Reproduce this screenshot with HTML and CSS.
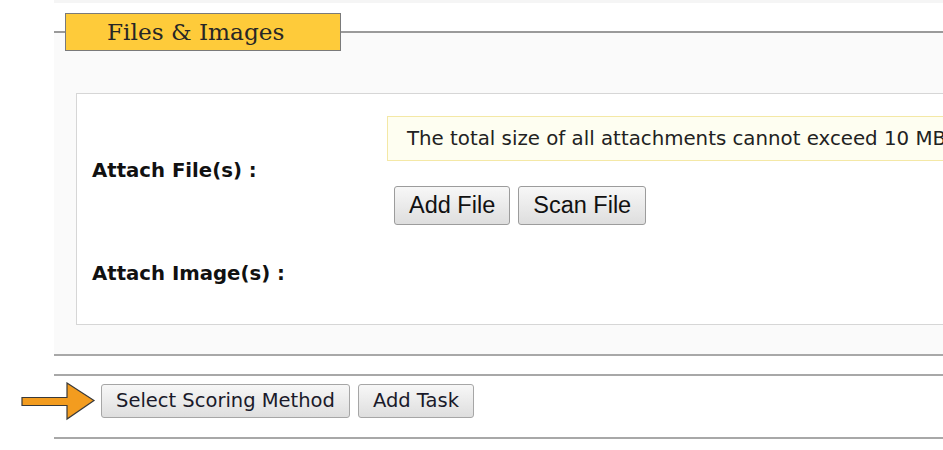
FILE: index.html
```html
<!DOCTYPE html>
<html lang="en">
<head>
    <meta charset="UTF-8">
    <meta name="viewport" content="width=device-width, initial-scale=1.0">
    <title>Files &amp; Images</title>
    <link rel="stylesheet" href="styles.css">
</head>
<body>
    <div class="page">
        <div class="top-strip"></div>

        <div class="section">
            <div class="legend">Files &amp; Images</div>

            <div class="attach-box">
                <div class="attach-row">
                    <div class="attach-label">Attach File(s) :</div>
                    <div class="attach-value">
                        <div class="notice">The total size of all attachments cannot exceed 10 MB</div>
                        <div class="btn-group">
                            <button class="btn">Add File</button>
                            <button class="btn">Scan File</button>
                        </div>
                    </div>
                </div>
                <div class="attach-row attach-row-images">
                    <div class="attach-label">Attach Image(s) :</div>
                    <div class="attach-value"></div>
                </div>
            </div>
        </div>

        <div class="action-bar">
            <svg class="pointer" width="76" height="40" viewBox="0 0 76 40">
                <path d="M1 15.5 H46 V1 L73 18.5 L46 37 V23.5 H1 Z" fill="#f39c1f" stroke="#3a3a3a" stroke-width="1.2" stroke-linejoin="miter"/>
            </svg>
            <button class="btn btn-small">Select Scoring Method</button>
            <button class="btn btn-small">Add Task</button>
        </div>
    </div>
</body>
</html>
```

FILE: styles.css
```css
body {
    margin: 0;
    background: #fff;
    overflow: hidden;
    font-family: Verdana, "DejaVu Sans", sans-serif;
    color: #1a1a1a;
}
.page {
    margin-left: 54px;
    margin-right: -40px;
}
.top-strip {
    height: 3px;
    background: #f5f5f5;
}
.section {
    margin-top: 28px;
    background: #fafafa;
    border-top: 2px solid #9a9a9a;
    border-bottom: 2px solid #a8a8a8;
    padding-bottom: 29px;
}
.legend {
    box-sizing: border-box;
    width: 276px;
    height: 38px;
    margin: -20px 0 0 11px;
    padding-left: 41px;
    background: #fecb3a;
    border: 1px solid #7a7a7a;
    font-family: "DejaVu Serif", Georgia, serif;
    font-size: 23.2px;
    line-height: 36px;
    color: #262626;
}
.attach-box {
    margin: 42px 0 0 22px;
    background: #fff;
    border: 1px solid #d6d6d6;
    padding: 22px 0 31px 15px;
}
.attach-row {
    display: flex;
    align-items: center;
}
.attach-row-images {
    margin-top: 28px;
    min-height: 40px;
}
.attach-label {
    width: 295px;
    font-size: 19.7px;
    font-weight: bold;
    color: #111;
}
.attach-value {
    flex: 1;
}
.notice {
    background: #fefef1;
    border: 1px solid #f4e8a6;
    border-right: none;
    padding: 10px 0 10px 19px;
    font-size: 19.8px;
    line-height: 23px;
    color: #222;
    white-space: nowrap;
}
.btn-group {
    display: flex;
    gap: 8px;
    margin: 25px 0 0 7px;
}
.btn {
    font-family: Arial, "Liberation Sans", sans-serif;
    font-size: 23.5px;
    line-height: 27px;
    padding: 5px 14px;
    color: #111;
    background: linear-gradient(#f7f7f7, #dedede);
    border: 1px solid #9c9c9c;
    border-radius: 3px;
    cursor: pointer;
}
.action-bar {
    position: relative;
    display: flex;
    gap: 8px;
    margin-top: 18px;
    border-top: 2px solid #a8a8a8;
    border-bottom: 2px solid #a8a8a8;
    padding: 8px 0 19px 47px;
}
.btn-small {
    font-family: Verdana, "DejaVu Sans", sans-serif;
    font-size: 19.5px;
    line-height: 24px;
    padding: 4px 14px;
    color: #1a1a2a;
    border-color: #a6a6a6;
}
.pointer {
    position: absolute;
    left: -33px;
    top: 6px;
}
```
